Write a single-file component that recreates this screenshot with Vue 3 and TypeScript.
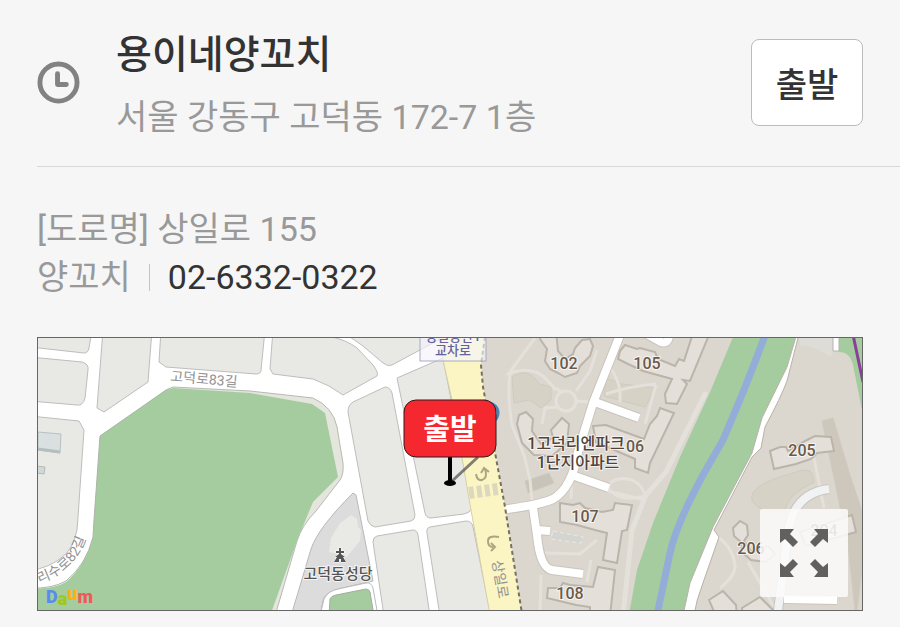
<script setup lang="ts">
interface Place {
  name: string
  address: string
  road: string
  category: string
  phone: string
}

interface MapLabel {
  text: string
  x: number
  y: number
}

const place: Place = {
  name: '용이네양꼬치',
  address: '서울 강동구 고덕동 172-7 1층',
  road: '상일로 155',
  category: '양꼬치',
  phone: '02-6332-0322',
}

const blocks: string[] = [
  'M30 330H92L89 348Q88 353 84 353L30 347Z',
  'M30 357L82 362Q89 364 88 370L85 398Q83 406 77 405L30 401Z',
  'M30 416L79 421L84 430L78 517L77 530Q73 550 61 558Q50 567 30 571Z',
  'M103 330L97 408L104 412L148 382L152 330Z',
  'M161 330L159 362L166 367L256 374Q261 374 261 370L265 330Z',
  'M273 330L270 369L273 374L313 379Q330 385 343 395L377 376Q379 373 373 365L357 348Q347 340 328 336V330Z',
  'M336 330L350 337L363 346L383 363Q388 367 392 365L444 337V330Z',
  'M353 402L385 387Q390 387 392 393L415 515Q415 520 411 521L375 527Q370 526 368 521L348 412Q348 405 353 402Z',
  'M397 378L443 358L472 508Q470 513 464 514L431 518Q426 518 425 513Z',
  'M377 536L413 530Q417 530 418 535L430 616H384L373 542Q373 537 377 536Z',
  'M430 527L466 521Q472 521 473 527L491 616H440L427 533Q426 528 430 527Z',
]

const towers: string[] = [
  'M543 330L540 339L547 349L545 361L550 369L558 373L565 377L577 373L580 366L590 356L593 346L590 339L582 340L575 348L573 354L565 359L558 351L556 330Z',
  'M625 345L637 349L640 348L655 352L658 359L675 366L679 359L684 361L694 330H711L690 381L683 380L687 384L677 404L666 403L665 394L672 379L643 371L628 364L618 359L620 351Z',
  'M519 415L526 412L533 419L532 431L541 444L553 438L551 430L562 418L569 424L567 443L552 456L534 455L522 443L517 424Z',
  'M593 426L606 425L622 431L644 439L650 424L657 416L660 408L674 413L650 463L648 473L635 468V459L596 442Z',
  'M560 503L573 505L580 503L585 508L602 512L613 510L615 503L632 505L627 530L622 531L617 563L603 560L607 533L595 530L577 525L560 522Z',
  'M548 588L560 588L563 583L570 585L593 587L598 567L615 570L610 616H590V607L576 605L547 598Z',
  'M770 451L780 447L786 447L788 451L807 440L815 436L831 437L834 451L817 453L811 459L796 464L774 469Z',
  'M733 528L740 521L747 525L748 535L744 541L752 552L768 546L775 554L766 562L751 560L742 552L741 542L734 536Z',
  'M800 532L852 515L856 532L806 546Z',
  'M709 600L723 591L736 605L737 616H716Z',
  'M742 608L760 597L774 611V616H742Z',
]

const towerLabels: MapLabel[] = [
  { text: '102', x: 564, y: 369 },
  { text: '105', x: 647, y: 369 },
  { text: '06', x: 635, y: 452 },
  { text: '107', x: 585, y: 522 },
  { text: '108', x: 570, y: 599 },
  { text: '205', x: 802, y: 456 },
  { text: '206', x: 751, y: 554 },
  { text: '204', x: 824, y: 536 },
]

const estateLabels: MapLabel[] = [
  { text: '1고덕리엔파크', x: 576, y: 449 },
  { text: '1단지아파트', x: 578, y: 468 },
]
</script>

<template>
  <main class="page">
    <header class="head">
      <svg class="clock" viewBox="0 0 44 44" aria-hidden="true">
        <circle cx="22" cy="22" r="19" />
        <path d="M21 13V24H30" />
      </svg>
      <div class="title">
        <h1>{{ place.name }}</h1>
        <p>{{ place.address }}</p>
      </div>
      <button class="depart" type="button">출발</button>
    </header>

    <section class="info">
      <p>[도로명] {{ place.road }}</p>
      <p class="contact">
        <span>{{ place.category }}</span>
        <i class="bar"></i>
        <a href="tel:02-6332-0322">{{ place.phone }}</a>
      </p>
    </section>

    <section class="map">
      <svg class="canvas" viewBox="38 338 824 272">
        <rect x="30" y="330" width="840" height="290" fill="#ffffff" />
        <g class="block">
          <path v-for="d in blocks" :key="d" :d="d" />
        </g>
        <path d="M38 432L61 434L60 453L38 450Z" fill="#dadfdf" stroke="#b9c0c1" />
        <path d="M38 449L60 452" stroke="#b5bebe" stroke-width="3" />
        <path d="M36 466L45 467L44 474L36 473Z" fill="#d2d7d7" stroke="#b3baba" />

        <path d="M173 387L250 391L313 398Q333 407 337 427L343 463Q344 474 340 480L316 511Q302 525 297 541L275 616" fill="#e4e5dd" stroke="#b8b9b4" />
        <path d="M100 436L166 390L173 388L250 393L312 404L325 413L338 477L313 502L298 538L270 616H30V588Q52 590 66 582Q86 565 93 537L94 520Z" fill="#a4cc9f" />
        <path d="M30 588Q52 589 66 581Q86 565 93 537L94 520L100 436L166 390L173 387" fill="none" stroke="#abb5a6" />

        <path d="M353 493Q318 528 311 549L291 616H320L323 600Q326 592 338 589L373 581L356 495Z" fill="#dcdcdc" stroke="#b8b8b8" />
        <path d="M340 523L351 515L357 519L358 527L361 530L360 541L350 553L347 557L329 552L331 538Z" fill="#e9e9e6" />
        <path d="M320 616L324 599Q328 591 338 589L366 583Q371 582 373 588L378 616Z" fill="#fff" stroke="#bbb" />
        <path d="M329 616L330 599Q331 596 336 595L366 589Q369 589 370 592L374 616Z" fill="#a4cc9f" stroke="#a1b09d" />
        <g fill="#555" stroke="#fff" paint-order="stroke">
          <path d="M339 548H341V551H344V553H341V554L345 557H343L346 562H341V559H339V562H334L337 557H335L339 554V553H336V551H339Z" />
        </g>

        <!-- apartment district -->
        <path d="M482 330H870V620H522L505 507L483 387L481 365Z" fill="#dbd7cf" />
        <g class="lawn">
          <path d="M512 377Q528 366 539 384L551 387V400L541 408L530 400L514 403Z" />
          <path d="M606 378L622 384L656 388L645 407L604 396Z" />
          <path d="M525 481L549 473L554 483L528 493Z" fill="#c9c4ba" />
          <path d="M752 501Q748 485 790 474Q810 466 812 474L814 482Q785 496 785 512Q762 515 752 501Z" />
          <path d="M822 421L833 418L850 475L862 511V570L856 620L848 545Z" fill="#cdc7bc" />
        </g>
        <g class="trail">
          <path d="M535 338L509 373Q534 365 547 380L556 390M510 374Q507 394 512 425L524 455L530 480L533 510" />
          <circle cx="566" cy="401" r="10" />
          <path d="M558 407L545 408L542 424M576 401L590 402M597 350L590 371L576 391M556 388L562 393" />
          <path d="M610 367Q622 384 620 402M606 394Q630 386 656 384M656 385L645 424" />
          <path d="M706 392L666 472L646 495L632 530L623 616" stroke-width="5" />
          <path d="M572 480L571 499M607 488Q613 475 632 480Q643 485 645 496Q620 503 609 489M645 500L608 491" />
          <path d="M545 553L580 554L597 540M541 575L540 616M591 560L587 582" />
          <path d="M814 458L824 508M718 537Q733 548 735 565Q736 576 720 588M748 562L774 607" />
        </g>
        <path d="M553 531L583 537L581 543L551 539Z" fill="#d3d5d0" stroke="#ece9e1" stroke-dasharray="4 3" />

        <path d="M736 330L710 392L680 457L653 523L637 570L628 620H682L690 583L713 527L752 453L762 418L787 367L798 330Z" fill="#a4cc9f" />
        <path d="M767 330Q748 382 723 440L703 475Q676 525 670 553L656 620" class="stream" />
        <path d="M798 330L787 367L762 418L752 453L713 527L690 583L682 620H693Q696 600 704 580L719 537L714 530L752 457L761 448L765 427Q781 397 787 381L800 330Z" fill="#fff" stroke="#b7b2aa" />
        <path d="M799 337L800 346Q813 344 830 357L833 353V337Z" fill="#dddcd6" />
        <path d="M839 330V352Q850 352 853 365L863 415V330Z" fill="#a4cc9f" />
        <path d="M833 330V351H839V330" fill="#fff" stroke="#b7b2aa" />
        <path d="M852 330L863 382" stroke="#8a3f9a" stroke-width="3" />

        <g class="street edge">
          <path d="M622 330L593 403L578 452Q572 488 553 499Q540 505 501 510" />
          <path d="M592 401L639 418M569 474L609 488M533 508L537 535Q540 568 552 570L583 574M537 530L550 531M645 333L661 342Q668 344 669 336" />
          <path d="M829 489Q796 493 789 527L777 618" />
          <path d="M784 599L837 600" />
        </g>
        <g class="street">
          <path d="M622 330L593 403L578 452Q572 488 553 499Q540 505 501 510" />
          <path d="M592 401L639 418M569 474L609 488M533 508L537 535Q540 568 552 570L583 574M537 530L550 531M645 333L661 342Q668 344 669 336" />
          <path d="M829 489Q796 493 789 527L777 618" stroke="#f0f2f4" />
          <path d="M784 599L837 600" />
        </g>

        <g class="tower">
          <path v-for="d in towers" :key="d" :d="d" />
        </g>

        <!-- main road -->
        <path d="M438 330L443 360L452 400L471 510L491 620H523L505 507L483 387L481 365L486 330Z" fill="#fbf5c4" />
        <path d="M438 330L443 360L452 400L471 510L491 620" fill="none" stroke="#d6cfa6" />
        <path d="M486 330L481 365L483 387L505 507L523 620" class="rail" />
        <circle cx="488" cy="413" r="10" fill="#fff" stroke="#4486b6" stroke-width="3" />
        <path d="M469 493L498 489" stroke="#ddd8bd" stroke-width="12" stroke-dasharray="5 3" />
        <g class="turn">
          <path d="M476 474Q477 481 482 480Q488 478 485 469M481 473L484 468L489 472" />
          <path d="M499 537Q488 535 488 541Q488 547 493 547M491 543L495 547L491 551" />
        </g>

        <rect x="420" y="330" width="66" height="31" fill="#f4f4fa" fill-opacity=".65" stroke="#aaa9c4" />
        <g class="junction">
          <text x="453" y="341">상일동산1</text>
          <text x="453" y="355">교차로</text>
        </g>

        <text class="roadname" transform="translate(170 381) rotate(5)">고덕로83길</text>
        <path id="suro" d="M27 587Q68 577 82 548Q88 536 90 516" fill="none" />
        <text class="roadname"><textPath href="#suro">아리수로82길</textPath></text>
        <text class="roadname" transform="translate(492 561) rotate(80)">상일로</text>
        <text class="poi" x="338" y="579">고덕동성당</text>

        <g class="apt">
          <text v-for="l in towerLabels" :key="l.text" :x="l.x" :y="l.y">{{ l.text }}</text>
        </g>
        <g class="apt estate">
          <text v-for="l in estateLabels" :key="l.text" :x="l.x" :y="l.y">{{ l.text }}</text>
        </g>

        <text class="logo" x="46" y="603">
          <tspan fill="#5a8cf0">D</tspan><tspan fill="#a0c814" dy="2">a</tspan><tspan fill="#f8b413" dy="-5">u</tspan><tspan fill="#ee5a58" dy="3">m</tspan>
        </text>

        <!-- departure marker -->
        <path d="M451 482L478 457" stroke="#555" stroke-width="3" stroke-opacity=".75" />
        <ellipse cx="450" cy="483" rx="6" ry="3" />
        <path d="M450 456V483" stroke="#000" stroke-width="4" />
        <rect x="404" y="400" width="92" height="57" rx="12" fill="#f5272f" stroke="#35181a" />
        <text class="pin" x="450" y="440">출발</text>
      </svg>

      <button class="expand" type="button" aria-label="지도 확대">
        <svg viewBox="0 0 48 48" aria-hidden="true">
          <path
            v-for="turn in [0, 90, 180, 270]"
            :key="turn"
            :transform="`rotate(${turn} 24 24)`"
            d="M0 0H14L10 5L18 13L13 18L5 10L0 14Z"
          />
        </svg>
      </button>
    </section>
  </main>
</template>

<style>
body {
  margin: 0;
  background: #f6f6f6;
}
</style>

<style scoped>
.page {
  font-family: Roboto, 'Noto Sans CJK KR', sans-serif;
  font-size: 34px;
  color: #999;
  padding-bottom: 16px;
}

h1,
p {
  margin: 0;
  font-weight: 400;
}

.head {
  display: flex;
  align-items: center;
  margin-left: 37px;
  padding: 17px 37px 19px 0;
  border-bottom: 1px solid #d8d8d8;
}

.clock {
  width: 43px;
  height: 43px;
  flex: none;
  fill: none;
  stroke: #828282;
  stroke-width: 5;
  stroke-linecap: round;
  stroke-linejoin: round;
}

.title {
  flex: 1;
  margin-left: 36px;
  padding-top: 6px;
}

.title h1 {
  font-size: 39px;
  font-weight: 500;
  line-height: 64px;
  color: #333;
}

.title p {
  line-height: 60px;
}

.depart {
  width: 112px;
  height: 87px;
  border: 1px solid #bcbcbc;
  border-radius: 8px;
  background: #fff;
  color: #333;
  font: inherit;
  font-weight: 500;
  padding: 0;
}

.info {
  padding: 38px 37px 36px;
  line-height: 48px;
}

.contact {
  display: flex;
  align-items: center;
}

.bar {
  width: 1px;
  height: 27px;
  margin: 0 18px;
  background: #c4c4c4;
}

.contact a {
  color: #333;
  text-decoration: none;
}

.map {
  position: relative;
  margin: 0 37px;
  border: 1px solid #666;
}

.canvas {
  display: block;
  width: 100%;
}

.block path {
  fill: #e8e9e5;
  stroke: #bdbdbb;
}

.lawn path {
  stroke: #cfcbc0;
}

.lawn path:not([fill]) {
  fill: #d6d2c6;
}

.trail {
  fill: none;
  stroke: #e4e1da;
  stroke-width: 3;
}

.stream {
  fill: none;
  stroke: #92add8;
  stroke-width: 7;
}

.street {
  fill: none;
  stroke: #fff;
  stroke-width: 8;
}

.street.edge {
  stroke: #c9c5bc;
  stroke-width: 10;
}

.tower path {
  fill: #e4dfd8;
  stroke: #bab4ab;
  stroke-width: 2;
}

.rail {
  fill: none;
  stroke: #77705f;
  stroke-width: 2;
  stroke-dasharray: 4 3;
}

.turn {
  fill: none;
  stroke: #aaa582;
  stroke-width: 2;
}

.junction {
  font-size: 13px;
  font-weight: 500;
  fill: #6661a0;
  text-anchor: middle;
}

.roadname {
  font-size: 14px;
  fill: #929292;
}

.poi,
.apt {
  text-anchor: middle;
  paint-order: stroke;
  stroke: #fff;
  stroke-opacity: 0.7;
  stroke-width: 2;
  font-weight: 500;
}

.poi {
  font-size: 15px;
  fill: #555;
}

.apt {
  font-size: 16px;
  fill: #6a5a4c;
}

.estate {
  fill: #51423a;
}

.logo {
  font-size: 18px;
  font-weight: 900;
}

.pin {
  font-size: 29px;
  font-weight: 700;
  fill: #fff;
  text-anchor: middle;
}

.expand {
  position: absolute;
  right: 14px;
  bottom: 13px;
  width: 88px;
  height: 88px;
  display: grid;
  place-items: center;
  padding: 0;
  border: 0;
  border-radius: 2px;
  background: rgba(250, 250, 249, 0.87);
}

.expand svg {
  width: 48px;
  height: 48px;
  fill: #606060;
}
</style>
